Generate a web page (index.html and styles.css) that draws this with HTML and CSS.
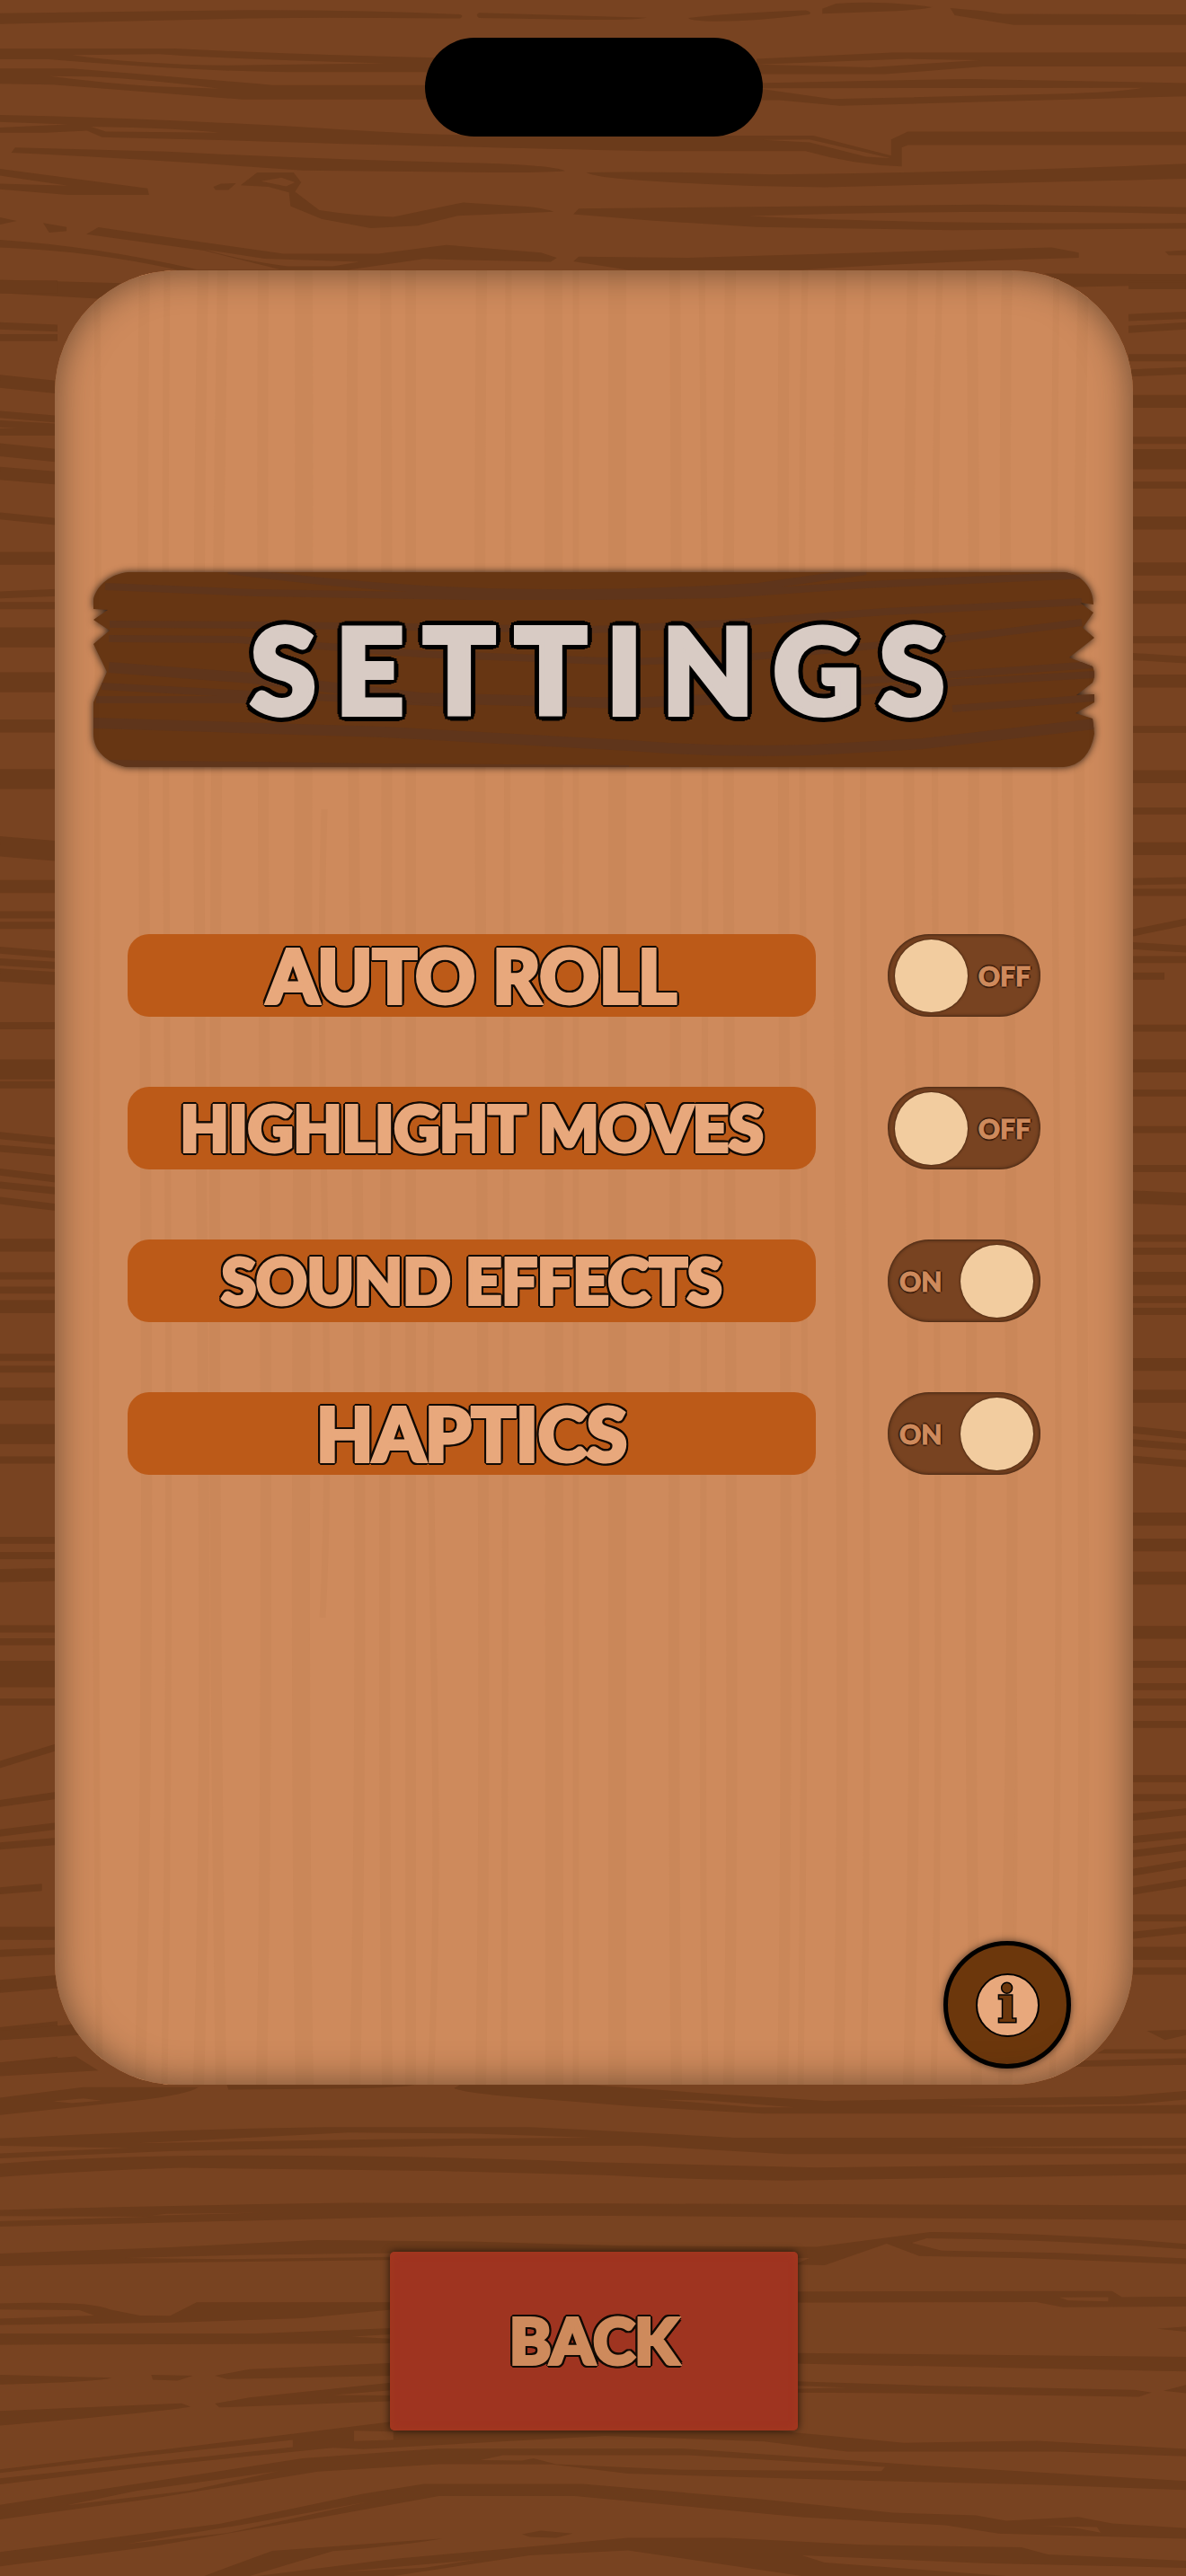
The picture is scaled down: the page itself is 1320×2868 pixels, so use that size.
FILE: index.html
```
<!DOCTYPE html>
<html lang="en">
<head>
  <meta charset="UTF-8">
  <meta name="viewport" content="width=device-width, initial-scale=1">
  <title>Settings</title>
  <link rel="stylesheet" href="styles.css">
</head>
<body>

  <!-- Dark wood background -->
  <svg class="wood" viewBox="0 0 1320 2868" preserveAspectRatio="none" aria-hidden="true">
    <!-- above the panel -->
    <g transform="scale(.842 .4464)" class="grain">
      <path d="M0 33L330 25Q500 25 608 36Q614 40 608 46Q400 42 330 46L0 60Z"/>
      <path d="M633 32L855 44Q840 50 760 49L633 45Q628 38 633 32Z"/>
      <path d="M910 45Q960 33 1065 26Q1074 30 1070 36Q1000 54 940 53Q912 52 910 45Z"/>
      <path d="M1087 22L1105 9Q1170 0 1232 18Q1220 24 1175 28L1087 34Z"/>
      <path d="M1256 20Q1290 24 1325 35L1568 36V62H1340L1262 38Z"/>
      <path fill-rule="evenodd" d="M0 121H230Q400 137 575 144V180H380Q240 176 65 148H0ZM95 137Q180 160 300 163L510 158Q300 147 210 135Z"/>
      <path fill-rule="evenodd" d="M0 171H95Q250 195 360 212H575V248H320Q200 230 70 211L0 209ZM65 190Q140 208 200 215L290 221Q200 198 120 191Z"/>
      <path fill-rule="evenodd" d="M1000 147L1180 131H1568V166H1300L1170 185H1000ZM1000 161L1150 168L1295 150L1200 147Z"/>
      <path fill-rule="evenodd" d="M1000 207L1280 197L1568 207V240L1110 264L1030 250H1000ZM1000 220L1100 247L1400 234Q1480 230 1510 219Z"/>
      <path fill-rule="evenodd" d="M0 287Q200 295 420 319Q560 336 640 338H1075L1178 388V348L1200 328L1568 329V362H1200L1192 368V415Q1130 412 1065 377H860Q500 362 320 351L135 342L115 326L60 331H0ZM0 304L90 310L0 318ZM120 316L140 328L290 331Q240 320 120 316ZM1008 349L1070 355L1145 391L1178 395L1070 348Z"/>
      <path d="M20 368L220 378Q450 400 660 408Q735 414 747 426Q720 432 600 429L400 425Q180 395 15 381Z"/>
      <path d="M775 430Q850 426 1020 435Q1300 430 1568 408V446Q1300 457 1090 467Q960 465 850 450Q785 442 775 430Z"/>
      <path d="M0 421L195 470L197 486H90L0 472V458L90 463L0 438Z"/>
      <path d="M0 542L22 551L0 560ZM57 556L88 566V576L65 580ZM282 466L292 458L312 457L302 474L285 474Z"/>
      <path fill-rule="evenodd" d="M340 430H388L398 455L390 478L422 524Q470 538 520 541L612 505L700 516Q725 522 732 528Q680 532 605 538L552 563L490 569L425 546L384 514L382 480L355 466L318 462ZM345 452L378 465L390 455L372 443Z"/>
      <path fill-rule="evenodd" d="M765 520L1300 510L1568 517V534Q1300 520 990 539Q1200 560 1568 556V570L1260 574L1000 566L860 550L758 534Z"/>
      <path fill-rule="evenodd" d="M130 567L375 633H500L590 611L715 630L736 643L728 653L560 646L460 673H235Q120 625 0 617V598Q130 615 260 672H370L270 625L114 584ZM270 622Q320 650 380 664H440L475 653L350 645Z"/>
      <path d="M765 640L910 643L1390 617L1426 630V643Q1200 655 1060 673H830L758 652ZM1540 627L1568 624V637H1545Z"/>
      <path d="M0 698L160 706V748L0 731ZM1380 682L1568 684V710L1420 716Z"/>
    </g>

    <!-- left of the panel -->
    <g transform="translate(0 280) scale(.3333 1.314)">
      <path class="line-sm" d="M0 63l192 2M0 73h192M0 138l192 4M0 146l192 3M0 153h192M0 224l192 5M0 291l192-2M0 300h192M0 562h192M0 571h192M0 592l192 4M0 602l192 3M0 656h192M0 706h192M0 749l192 5M0 760l192 4M0 780l192 6M0 791l192 5M0 804l192 6M0 868h192M0 880h192M0 937h192M0 947h192M0 1024h192M0 1092h192M0 1105h192M0 1167h192M0 1178h192M0 1197h192M0 1229h192M0 1282l192-15M0 1315l192-7M0 1340l192-6M0 1351l192-4M0 1389l140-3M0 1442l192-2"/>
      <path class="line-md" d="M0 30h192M0 110l192 5M0 168l192 5M0 188l192 4M0 260h192M0 402h192M0 538h192M0 613l192 3M0 842h192M0 894h192M0 968h192M0 1122l192-1M0 1425h192M0 1470l192-4M0 1510l192-5M0 1540l192-5"/>
      <path class="line-lg" d="M0 327h192M0 365h192M0 447h192M0 504l192 4M0 693h192M0 1002h192M0 1208h192"/>
    </g>

    <!-- right of the panel -->
    <g transform="translate(1256 280) scale(.3333 1.314)">
      <path class="line-sm" d="M0 22h192M0 29h192M0 56l192-2M0 66l192-3M0 90h192M0 103l192-2M0 160h192M0 198h192M0 329h192M0 343l192 3M0 405h192M0 474h192M0 534l192-1M0 543h192M0 578l192-10M0 588l192 3M0 600h192M0 614h120M0 658h192M0 713h192M0 744h192M0 777h192M0 836h192M0 847h192M0 888h192M0 898h192M0 998l192 5M0 1009l192 4M0 1023l192 4M0 1197h192M0 1216h192M0 1229h192M0 1248h192M0 1294h192M0 1310h192M0 1327l192-5M0 1346l192-5M0 1358l192-6M0 1374l192-8M0 1390l192-8M0 1412h192M0 1427l192-5M0 1457h192"/>
      <path class="line-md" d="M0 127h192M0 230h192M0 269h192M0 293h192M0 364h192M0 445h192M0 506h192M0 690h192M0 801l192 2M0 870h192M0 943h192M0 970h192M0 1074h192M0 1096h192M0 1124h192M0 1170h192M0 1442h192"/>
      <path class="line-lg" d="M0 176h192"/>
    </g>

    <!-- below the panel -->
    <g transform="translate(0 2250) scale(.842 .3941)" class="grain">
      <path d="M0 28L120 5V38L0 54ZM0 118L100 100L130 140L0 156Z"/>
      <path fill-rule="evenodd" d="M0 217L110 187H262Q250 207 180 225L0 266ZM70 227L95 232L135 225L110 219Z"/>
      <path d="M300 181H548Q530 189 460 191L302 194ZM1460 80H1568V92H1450ZM1430 112L1568 105V124L1410 130ZM1516 28L1568 25V40L1540 54Z"/>
      <path fill-rule="evenodd" d="M608 181H780L930 204L1090 226L1480 213L1568 198V222L1500 235L1250 241L1400 243L1568 237V262H1010L840 242L660 211Q610 200 600 190ZM870 222L1000 244H1050L930 224Z"/>
      <path fill-rule="evenodd" d="M0 332Q250 305 430 300H700Q850 315 970 330H1568V352L1250 357L1568 361V376H1040L850 353H600L230 367L0 388V374L170 359L0 353ZM180 346L500 334L785 330L620 318L460 315Z"/>
      <path d="M0 403Q150 380 330 380Q550 380 780 399L1080 414L1568 402V434L1040 451Q900 448 800 436L580 424L240 415Q100 425 0 441Z"/>
      <path fill-rule="evenodd" d="M0 534Q250 520 460 514L800 516L1568 521V563L1100 555L760 550Q560 550 410 560L0 581V566L200 553L0 551ZM200 550L350 542L220 545Z"/>
      <path fill-rule="evenodd" d="M0 657L220 640L420 619L620 623L820 635L1080 638L1230 596Q1400 598 1568 630V645Q1400 618 1225 614L1205 627L1245 649L1400 655L1568 671V687L1350 670L1215 664L1172 629L1090 690L1050 688L1070 670L540 675L250 682L0 693ZM165 670L300 673L540 666L545 655L330 661Z"/>
      <path fill-rule="evenodd" d="M980 765L1470 763L1483 780L1568 779V807L1405 809L1370 794L980 796ZM1400 781L1412 790L1465 792L1465 780Z"/>
      <path fill-rule="evenodd" d="M0 798Q120 790 145 815L185 832L225 833L260 795H520V815L400 840L230 852L0 859V841L125 832L105 817L0 815Z"/>
      <path d="M0 883H340L520 868V885L465 892L520 898V911L0 915ZM1050 938L1568 949V990L1050 968ZM1530 870L1568 863V878Z"/>
      <path d="M0 1000L148 1008Q130 1020 0 1027ZM200 1000L255 1002L235 1016L202 1014ZM284 1002L330 984L520 966V1002L300 1012Z"/>
      <path d="M1050 1018L1220 1030L1500 1042L1522 1050L1505 1062L1200 1052L1050 1050V1040L1120 1036L1050 1030ZM1568 1028L1538 1045L1568 1052Z"/>
      <path d="M0 1102L240 1080L252 1090Q200 1108 0 1143ZM284 1081L330 1064L520 1021V1043L440 1057L520 1058V1074L290 1092Z"/>
      <path fill-rule="evenodd" d="M0 1267L520 1132V1158H1025L1195 1192L1370 1186L1568 1209V1230L1400 1217H1120L1010 1188L800 1172L480 1210L440 1206L200 1258L0 1309V1292L387 1204V1184L180 1231L0 1277ZM468 1158V1187L520 1184V1160Z"/>
      <path fill-rule="evenodd" d="M0 1367L400 1236L580 1208H900L1200 1253L1568 1300V1325L1370 1310L1150 1299L830 1279L730 1253L580 1252L420 1273L200 1350L0 1408ZM88 1368L250 1327L368 1272L180 1328ZM635 1241L690 1242L705 1236L735 1252L900 1268L1165 1272L1170 1260L910 1227H665Z"/>
      <path fill-rule="evenodd" d="M0 1500L290 1421L480 1336L560 1308H770L1000 1350L1180 1389L1290 1397L1330 1412L1425 1401L1470 1420L1568 1433V1463L1320 1448L1250 1425L1060 1402L760 1342H580L400 1412L200 1485L0 1541ZM165 1478L300 1447L485 1359L340 1416ZM1375 1426L1420 1432L1455 1446L1450 1430Z"/>
      <path d="M690 1450L715 1440L757 1448L735 1460L700 1458ZM270 1568L360 1497L585 1462Q540 1480 440 1498L330 1568Z"/>
      <path fill-rule="evenodd" d="M340 1568L520 1520L830 1460H960L1140 1480L1350 1487L1385 1507L1568 1525V1545L1300 1532L1060 1510L1090 1530L1330 1568H1060L830 1496L700 1510L520 1568ZM450 1556L560 1545L630 1522Z"/>
    </g>
  </svg>

  <div class="island"></div>

  <main class="panel">
    <svg class="panel-grain" viewBox="0 0 1200 2020" preserveAspectRatio="none" aria-hidden="true">
      <path class="thin" d="M47 0C52 500 40 1300 50 2020M125 0C118 600 134 1200 122 2020M505 0C498 700 508 1300 500 2020M580 0V2020M720 0C730 800 716 1500 724 2020M835 0C825 500 842 1100 830 2020M905 0C890 600 912 1400 900 2020M985 0C970 500 992 1500 978 2020M1115 0C1105 700 1128 1300 1110 2020M420 1100C412 1400 434 1700 418 2020M300 600C290 900 312 1250 298 1500M1065 900C1050 1200 1080 1600 1062 2020"/>
      <path d="M100 0C92 500 112 1300 95 2020M165 0C150 800 178 1400 160 2020M187 0C180 400 172 1200 185 2020M232 0C228 700 242 1400 230 2020M332 0C325 600 350 1300 334 2020M368 0C374 700 362 1400 370 2020M396 0V2020M475 0C468 700 484 1500 474 2020M690 0C696 600 684 1500 692 2020M752 0C744 800 760 1500 750 2020M812 0C806 500 820 1500 810 2020M875 0C866 800 884 1500 872 2020M955 0C940 700 968 1400 950 2020M1020 0C1030 600 1010 1500 1026 2020M1060 0C1050 500 1080 1200 1056 2020M1145 0C1130 700 1156 1500 1140 2020"/>
      <path class="thick" d="M277 0C280 600 268 1500 278 2020M555 0C560 700 550 1400 556 2020M626 0C620 800 632 1500 626 2020"/>
    </svg>

    <header class="plank">
      <svg class="plank-shape" viewBox="0 0 1114 217" preserveAspectRatio="none" aria-hidden="true">
        <defs>
          <clipPath id="plankEdge">
            <path d="M38 0H1080C1100 2 1113 18 1113 36L1098 34L1113 45L1101 62L1114 73L1086 95L1112 105Q1116 114 1112 123L1094 137L1114 136V145L1093 157L1112 163L1114 180Q1108 214 1080 217H38C16 213 0 200 0 180V145L15 111L0 80L18 65L0 53L16 42L0 41V30C4 14 20 2 38 0Z"/>
          </clipPath>
        </defs>
        <g clip-path="url(#plankEdge)">
          <rect class="plank-fill" width="1114" height="217"/>
          <path class="plank-line" d="M13 16L180 23L420 27H556L700 25L860 14L1110 3M150 -2Q300 18 440 22T740 16L860 -1M18 58L200 59L556 64L703 57L882 44L1100 33M17 74L160 75L364 91L596 100L735 94L956 74L1100 56M9 127L176 136L400 146M3 142H176M854 121L1114 103M780 140L960 123L1114 114M956 152L1114 140"/>
          <path class="plank-line wide" d="M17 106L176 118L364 140L592 146L730 140M0 168L323 178L596 193Q700 201 800 198L923 191L1114 169M17 215L323 219L596 221"/>
        </g>
      </svg>
      <h1 class="title">SETTINGS</h1>
    </header>

    <form class="options">
      <div class="option">
        <label class="option-name large" for="autoRoll">AUTO ROLL</label>
        <label class="switch">
          <input type="checkbox" id="autoRoll">
          <span class="on">ON</span>
          <span class="off">OFF</span>
        </label>
      </div>
      <div class="option">
        <label class="option-name" for="highlightMoves">HIGHLIGHT MOVES</label>
        <label class="switch">
          <input type="checkbox" id="highlightMoves">
          <span class="on">ON</span>
          <span class="off">OFF</span>
        </label>
      </div>
      <div class="option">
        <label class="option-name" for="soundEffects">SOUND EFFECTS</label>
        <label class="switch">
          <input type="checkbox" id="soundEffects" checked>
          <span class="on">ON</span>
          <span class="off">OFF</span>
        </label>
      </div>
      <div class="option">
        <label class="option-name large" for="haptics">HAPTICS</label>
        <label class="switch">
          <input type="checkbox" id="haptics" checked>
          <span class="on">ON</span>
          <span class="off">OFF</span>
        </label>
      </div>
    </form>

    <button type="button" class="info" aria-label="Info"><span class="info-dot">i</span></button>
  </main>

  <button type="button" class="back">BACK</button>

</body>
</html>
```
FILE: styles.css
```
* {
  box-sizing: border-box;
}

body {
  position: relative;
  margin: 0;
  min-height: 100vh;
  display: flex;
  flex-direction: column;
  align-items: center;
  padding: 42px 59px 162px 61px;
  background-color: #784321;
  font-family: Lato, "Open Sans", sans-serif;
  font-weight: 900;
}

button {
  border: none;
  padding: 0;
  font: inherit;
  cursor: pointer;
}

/* background grain */
.wood {
  position: absolute;
  top: 0;
  left: 0;
  width: 100%;
  height: 100%;
  z-index: -1;
}

.grain {
  fill: #6b3b1b;
}

.line-sm,
.line-md,
.line-lg {
  fill: none;
  stroke: #6b3b1b;
  stroke-width: 6;
}

.line-md {
  stroke-width: 11;
}

.line-lg {
  stroke-width: 17;
}

.island {
  width: 376px;
  height: 110px;
  border-radius: 55px;
  background: #000;
}

/* light wood panel */
.panel {
  position: relative;
  flex: 1;
  align-self: stretch;
  display: flex;
  flex-direction: column;
  margin: 149px 0 186px;
  padding: 336px 43px 18px;
  border-radius: 136px;
  overflow: hidden;
  background-color: #ce8a5c;
}

.panel::after {
  content: "";
  position: absolute;
  inset: 0;
  border-radius: inherit;
  box-shadow: inset 0 0 40px rgba(40, 30, 20, 0.6);
  pointer-events: none;
}

.panel-grain {
  position: absolute;
  top: 0;
  left: 0;
  width: 100%;
  height: 100%;
  fill: none;
  stroke: #ca8759;
  stroke-width: 12;
}

.panel-grain .thin {
  stroke-width: 7;
}

.panel-grain .thick {
  stroke-width: 20;
}

.plank {
  position: relative;
  height: 217px;
  display: flex;
  align-items: center;
  justify-content: center;
}

.plank-shape {
  position: absolute;
  top: 0;
  left: 0;
  width: 100%;
  height: 100%;
  overflow: visible;
  filter: drop-shadow(0 0 4px rgba(0, 0, 0, 0.8));
}

.plank-fill {
  fill: #673613;
}

.plank-line {
  fill: none;
  stroke: #5f351b;
  stroke-width: 8;
}

.plank-line.wide {
  stroke-width: 12;
}

/* thick letters, the shadows reach past the stroke and make the outline */
.title {
  position: relative;
  margin: 0;
  padding: 0 0 4px 30px;
  font-size: 132px;
  line-height: 160px;
  font-weight: 900;
  letter-spacing: 22px;
  color: #d8cbc4;
  -webkit-text-stroke: 6px #d8cbc4;
  text-shadow: 8px 0 #000, -8px 0 #000, 0 8px #000, 0 -8px #000,
    6px 6px #000, -6px 6px #000, 6px -6px #000, -6px -6px #000,
    7px 3px #000, -7px 3px #000, 7px -3px #000, -7px -3px #000,
    3px 7px #000, -3px 7px #000, 3px -7px #000, -3px -7px #000;
}

.options {
  position: relative;
  display: flex;
  flex-direction: column;
  gap: 78px;
  margin: 186px 60px 40px 38px;
}

.option {
  display: flex;
  align-items: center;
  gap: 80px;
}

.option-name,
.back {
  padding-bottom: 4px;
  font-size: 70px;
  line-height: 90px;
  -webkit-text-stroke: 4px currentColor;
  text-shadow: 4px 0 #120a04, -4px 0 #120a04, 0 4px #120a04, 0 -4px #120a04,
    3px 3px #120a04, -3px 3px #120a04, 3px -3px #120a04, -3px -3px #120a04,
    4px 2px #120a04, -4px 2px #120a04, 4px -2px #120a04, -4px -2px #120a04,
    2px 4px #120a04, -2px 4px #120a04, 2px -4px #120a04, -2px -4px #120a04;
}

.option-name {
  flex: 1;
  height: 92px;
  border-radius: 24px;
  background: #bc5a18;
  color: #e8a87c;
  text-align: center;
  white-space: nowrap;
}

.option-name.large {
  font-size: 82px;
}

/* toggle */
.switch {
  width: 170px;
  height: 92px;
  display: flex;
  align-items: center;
  justify-content: space-between;
  padding: 0 11px 0 8px;
  border-radius: 46px;
  background: #784321;
  box-shadow: inset 0 0 4px rgba(0, 0, 0, 0.7);
  color: #ce8a5c;
  font-size: 30px;
  line-height: 40px;
  -webkit-text-stroke: 1px currentColor;
  text-shadow: 2px 0 1px #34190a, -2px 0 1px #34190a, 0 2px 1px #34190a, 0 -2px 1px #34190a;
  cursor: pointer;
}

.switch input {
  appearance: none;
  width: 81px;
  height: 81px;
  margin: 0;
  border-radius: 50%;
  background: #f2cc9f;
  box-shadow: 0 0 3px #2b1506;
}

.switch .on {
  display: none;
}

.switch:has(input:checked) {
  flex-direction: row-reverse;
  padding: 0 8px 0 13px;
}

.switch input:checked ~ .on {
  display: block;
}

.switch input:checked ~ .off {
  display: none;
}

.info {
  position: relative;
  align-self: flex-end;
  display: flex;
  align-items: center;
  justify-content: center;
  width: 142px;
  height: 142px;
  margin-top: auto;
  margin-right: 26px;
  border: 5px solid #000;
  border-radius: 50%;
  background: #6c370c;
  box-shadow: 0 0 8px rgba(0, 0, 0, 0.6);
}

.info-dot {
  width: 71px;
  height: 71px;
  border: 2px solid #000;
  border-radius: 50%;
  background: #e8a87c;
  color: #6c370c;
  font-family: "DejaVu Serif", serif;
  font-weight: bold;
  font-size: 56px;
  line-height: 64px;
  -webkit-text-stroke: 3px #000;
  paint-order: stroke fill;
}

.back {
  width: 454px;
  height: 199px;
  border-radius: 5px;
  background: #9f3420;
  box-shadow: 0 0 10px rgba(0, 0, 0, 0.7), inset 0 0 10px #a6391e;
  color: #ce8a5c;
}
```
